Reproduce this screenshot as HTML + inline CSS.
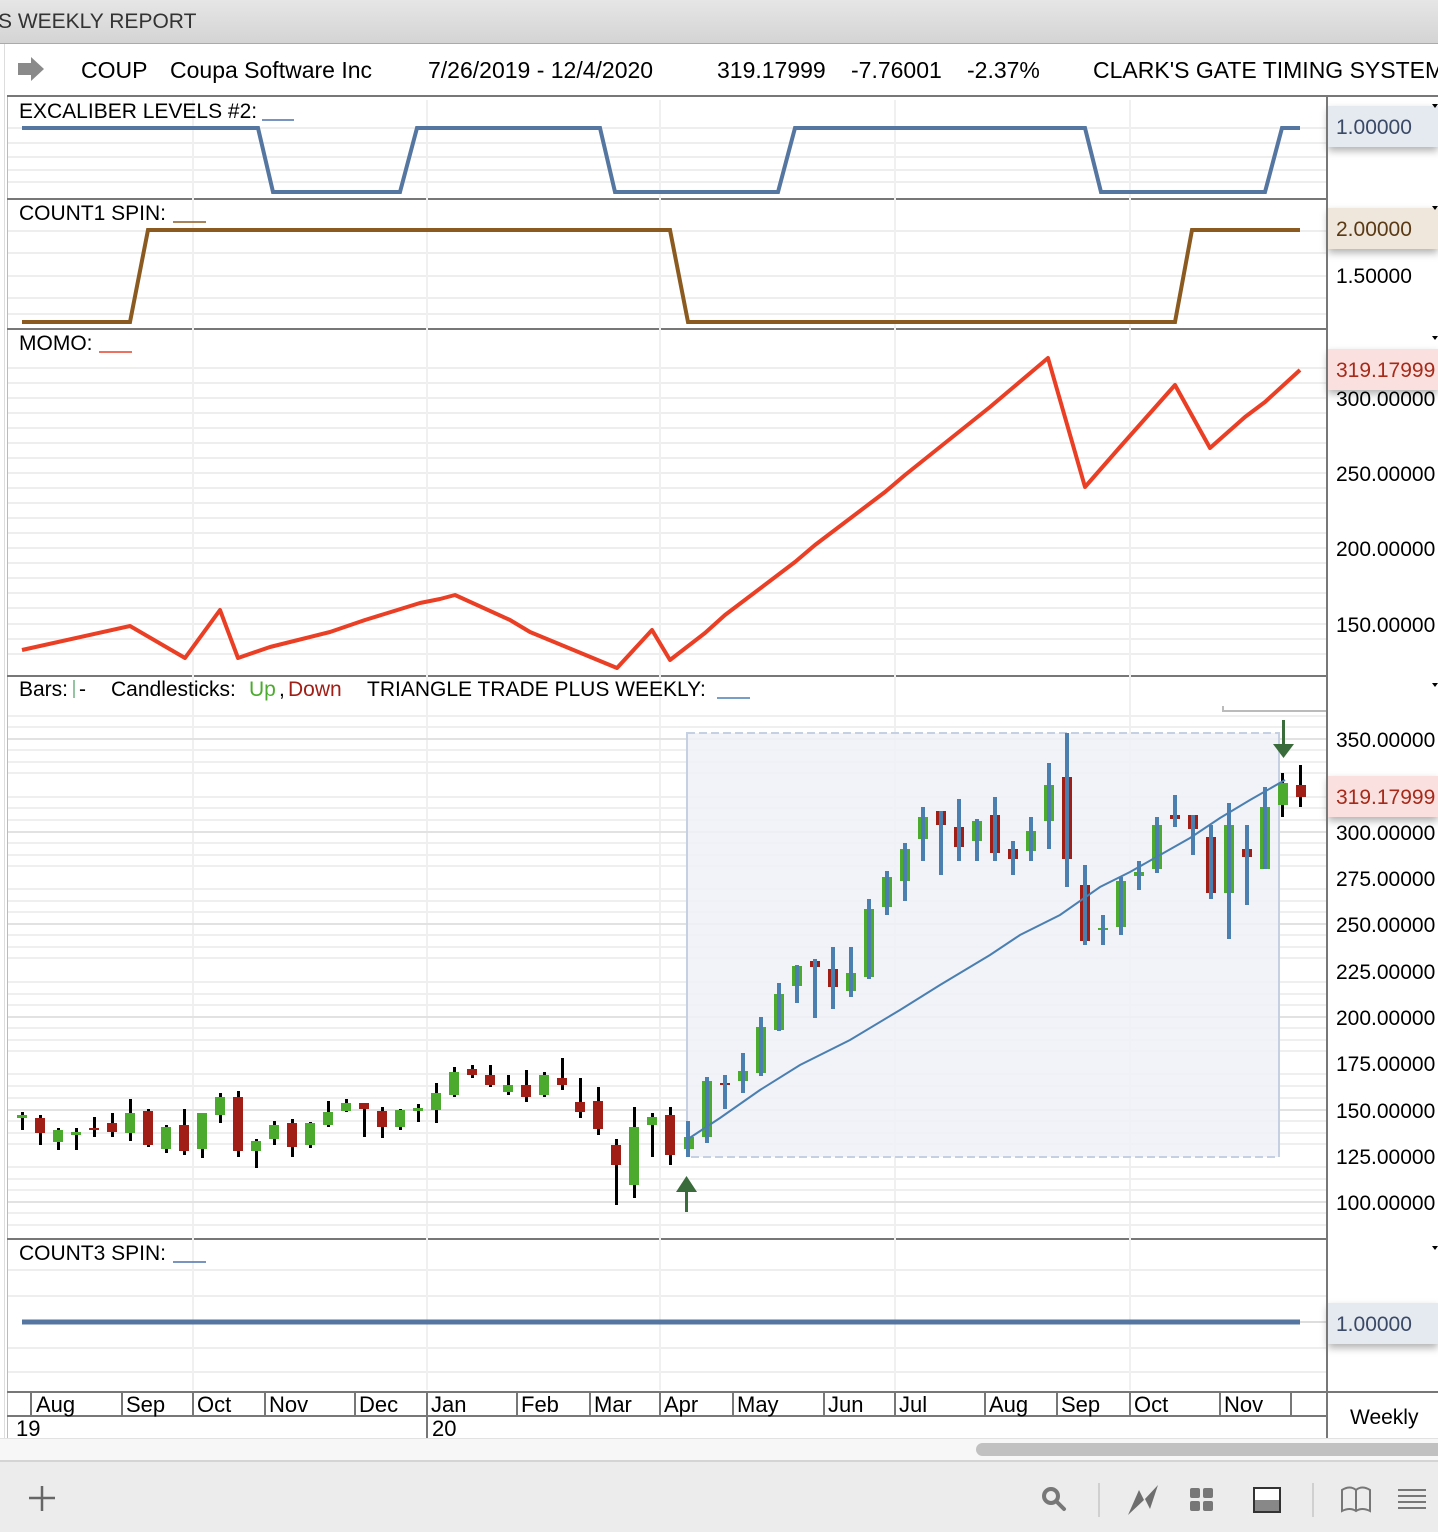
<!DOCTYPE html>
<html><head><meta charset="utf-8"><style>
html,body{margin:0;padding:0;background:#fff;}
svg{display:block;font-family:"Liberation Sans",Arial,sans-serif;}
</style></head><body>
<svg width="1438" height="1532" viewBox="0 0 1438 1532" xmlns="http://www.w3.org/2000/svg">
<defs>
<linearGradient id="tb" x1="0" y1="0" x2="0" y2="1"><stop offset="0" stop-color="#e6e6e6"/><stop offset="1" stop-color="#d4d4d4"/></linearGradient>
<filter id="sh" x="-10%" y="-40%" width="130%" height="190%"><feDropShadow dx="0" dy="4" stdDeviation="4" flood-color="#000" flood-opacity="0.3"/></filter>
</defs>
<rect x="0" y="0" width="1438" height="43" fill="url(#tb)"/>
<line x1="0" y1="43.5" x2="1438" y2="43.5" stroke="#aaa"/>
<text x="-2" y="28" font-size="21" fill="#333">S WEEKLY REPORT</text>
<rect x="0" y="44" width="1438" height="52" fill="#fff"/>
<line x1="4.5" y1="44" x2="4.5" y2="1462" stroke="#ddd"/>
<line x1="7.5" y1="96" x2="7.5" y2="1440" stroke="#bbb"/>
<path d="M18 63 h13 v-6 l13 12 -13 12 v-6 h-13z" fill="#8a8a8a"/>
<g font-size="23" fill="#000">
<text x="81" y="78">COUP</text>
<text x="170" y="78">Coupa Software Inc</text>
<text x="428" y="78">7/26/2019 - 12/4/2020</text>
<text x="717" y="78">319.17999</text>
<text x="851" y="78">-7.76001</text>
<text x="967" y="78">-2.37%</text>
<text x="1093" y="78">CLARK'S GATE TIMING SYSTEM</text>
</g>
<g stroke="#777" stroke-width="2">
<line x1="7" y1="96" x2="1438" y2="96"/>
<line x1="7" y1="199" x2="1438" y2="199"/>
<line x1="7" y1="329" x2="1438" y2="329"/>
<line x1="7" y1="676" x2="1438" y2="676"/>
<line x1="7" y1="1239" x2="1438" y2="1239"/>
<line x1="1327" y1="96" x2="1327" y2="1438"/>
</g>
<g stroke="#eeeeee" stroke-width="2">
<line x1="8" y1="128" x2="1326" y2="128"/><line x1="8" y1="143" x2="1326" y2="143"/><line x1="8" y1="157" x2="1326" y2="157"/><line x1="8" y1="170" x2="1326" y2="170"/><line x1="8" y1="182" x2="1326" y2="182"/>
<line x1="8" y1="231" x2="1326" y2="231"/><line x1="8" y1="253" x2="1326" y2="253"/><line x1="8" y1="276" x2="1326" y2="276"/><line x1="8" y1="298" x2="1326" y2="298"/><line x1="8" y1="314" x2="1326" y2="314"/>
<line x1="8" y1="368" x2="1326" y2="368"/><line x1="8" y1="383" x2="1326" y2="383"/><line x1="8" y1="398" x2="1326" y2="398"/><line x1="8" y1="413" x2="1326" y2="413"/><line x1="8" y1="428" x2="1326" y2="428"/><line x1="8" y1="443" x2="1326" y2="443"/><line x1="8" y1="458" x2="1326" y2="458"/><line x1="8" y1="473" x2="1326" y2="473"/><line x1="8" y1="488" x2="1326" y2="488"/><line x1="8" y1="503" x2="1326" y2="503"/><line x1="8" y1="518" x2="1326" y2="518"/><line x1="8" y1="533" x2="1326" y2="533"/><line x1="8" y1="548" x2="1326" y2="548"/><line x1="8" y1="563" x2="1326" y2="563"/><line x1="8" y1="578" x2="1326" y2="578"/><line x1="8" y1="593" x2="1326" y2="593"/><line x1="8" y1="608" x2="1326" y2="608"/><line x1="8" y1="624" x2="1326" y2="624"/><line x1="8" y1="639" x2="1326" y2="639"/><line x1="8" y1="654" x2="1326" y2="654"/>
<line x1="8" y1="1270" x2="1326" y2="1270"/><line x1="8" y1="1296" x2="1326" y2="1296"/><line x1="8" y1="1348" x2="1326" y2="1348"/><line x1="8" y1="1372" x2="1326" y2="1372"/>
</g>
<g stroke="#f0f0f0" stroke-width="2">
<line x1="193" y1="100" x2="193" y2="1390"/><line x1="427" y1="100" x2="427" y2="1390"/><line x1="660" y1="100" x2="660" y2="1390"/><line x1="895" y1="100" x2="895" y2="1390"/><line x1="1130" y1="100" x2="1130" y2="1390"/>
</g>
<g stroke="#efefef" stroke-width="2">
<line x1="8" y1="716" x2="1326" y2="716"/><line x1="8" y1="762" x2="1326" y2="762"/><line x1="8" y1="808" x2="1326" y2="808"/><line x1="8" y1="855" x2="1326" y2="855"/><line x1="8" y1="901" x2="1326" y2="901"/><line x1="8" y1="947" x2="1326" y2="947"/><line x1="8" y1="994" x2="1326" y2="994"/><line x1="8" y1="1040" x2="1326" y2="1040"/><line x1="8" y1="1086" x2="1326" y2="1086"/><line x1="8" y1="1133" x2="1326" y2="1133"/><line x1="8" y1="1179" x2="1326" y2="1179"/><line x1="8" y1="1225" x2="1326" y2="1225"/>
<line x1="8" y1="727" x2="1326" y2="727"/><line x1="8" y1="750" x2="1326" y2="750"/><line x1="8" y1="773" x2="1326" y2="773"/><line x1="8" y1="797" x2="1326" y2="797"/><line x1="8" y1="820" x2="1326" y2="820"/><line x1="8" y1="843" x2="1326" y2="843"/><line x1="8" y1="866" x2="1326" y2="866"/><line x1="8" y1="889" x2="1326" y2="889"/><line x1="8" y1="912" x2="1326" y2="912"/><line x1="8" y1="935" x2="1326" y2="935"/><line x1="8" y1="958" x2="1326" y2="958"/><line x1="8" y1="982" x2="1326" y2="982"/><line x1="8" y1="1005" x2="1326" y2="1005"/><line x1="8" y1="1028" x2="1326" y2="1028"/><line x1="8" y1="1051" x2="1326" y2="1051"/><line x1="8" y1="1074" x2="1326" y2="1074"/><line x1="8" y1="1098" x2="1326" y2="1098"/><line x1="8" y1="1121" x2="1326" y2="1121"/><line x1="8" y1="1144" x2="1326" y2="1144"/><line x1="8" y1="1167" x2="1326" y2="1167"/><line x1="8" y1="1190" x2="1326" y2="1190"/><line x1="8" y1="1213" x2="1326" y2="1213"/>
</g>
<g stroke="#e2e2e2" stroke-width="2">
<line x1="8" y1="739" x2="1326" y2="739"/><line x1="8" y1="832" x2="1326" y2="832"/><line x1="8" y1="924" x2="1326" y2="924"/><line x1="8" y1="1017" x2="1326" y2="1017"/><line x1="8" y1="1110" x2="1326" y2="1110"/><line x1="8" y1="1202" x2="1326" y2="1202"/>
</g>
<g font-size="21" fill="#000">
<text x="19" y="118">EXCALIBER LEVELS #2:</text><line x1="262" y1="120" x2="294" y2="120" stroke="#4a72a8" stroke-width="1.5"/>
<text x="19" y="220">COUNT1 SPIN:</text><line x1="173" y1="222" x2="206" y2="222" stroke="#8b5a20" stroke-width="1.5"/>
<text x="19" y="350">MOMO:</text><line x1="99" y1="352" x2="132" y2="352" stroke="#e8402a" stroke-width="1.5"/>
<text x="19" y="696">Bars:</text><line x1="74" y1="680" x2="74" y2="698" stroke="#2a8a40" stroke-width="1"/><text x="79" y="696">-</text>
<text x="111" y="696">Candlesticks:</text><text x="249" y="696" fill="#4cab2e">Up</text><text x="279" y="696">,</text><text x="288" y="696" fill="#a01e16">Down</text>
<text x="367" y="696">TRIANGLE TRADE PLUS WEEKLY:</text><line x1="717" y1="698" x2="750" y2="698" stroke="#4a7fb0" stroke-width="1.5"/>
<text x="19" y="1260">COUNT3 SPIN:</text><line x1="173" y1="1262" x2="206" y2="1262" stroke="#4a72a8" stroke-width="1.5"/>
</g>
<polyline fill="none" stroke="#5576a0" stroke-width="4" points="22,128 258,128 273,192 400,192 417,128 600,128 615,192 778,192 795,128 1085,128 1101,192 1265,192 1282,128 1300,128"/>
<polyline fill="none" stroke="#8b5a20" stroke-width="4" points="22,322 130,322 148,230 670,230 688,322 1175,322 1192,230 1300,230"/>
<polyline fill="none" stroke="#ea3f24" stroke-width="4" stroke-linejoin="round" points="22,650 130,626 185,658 220,610 238,658 270,647 290,642 330,632 365,620 420,603 440,599 455,595 510,620 530,632 617,668 652,630 670,660 705,633 725,615 795,562 815,545 885,492 905,475 990,407 1048,358 1085,487 1120,447 1175,385 1210,448 1245,417 1265,402 1300,370"/>
<line x1="22" y1="1322" x2="1300" y2="1322" stroke="#5576a0" stroke-width="5"/>
<line x1="1300" y1="1322" x2="1326" y2="1322" stroke="#ddd" stroke-width="2"/>
<rect x="687" y="733" width="592" height="424" fill="#eef1f8" fill-opacity="0.85" stroke="#c5d0e3" stroke-width="2" stroke-dasharray="8,4"/>
<line x1="687" y1="733" x2="687" y2="1157" stroke="#c5d0e3" stroke-width="2"/>
<line x1="1279" y1="733" x2="1279" y2="1157" stroke="#c5d0e3" stroke-width="2"/>
<path d="M1223 706 v5 h104" fill="none" stroke="#bbb" stroke-width="2"/>
<g>
<rect x="21" y="1112" width="3" height="18"/><rect x="17" y="1115" width="10" height="3" fill="#4cab2e"/>
<rect x="39" y="1115" width="3" height="30"/><rect x="35" y="1118" width="10" height="15" fill="#a01e16"/>
<rect x="57" y="1128" width="3" height="22"/><rect x="53" y="1130" width="10" height="12" fill="#4cab2e"/>
<rect x="75" y="1128" width="3" height="22"/><rect x="71" y="1132" width="10" height="3" fill="#4cab2e"/>
<rect x="93" y="1117" width="3" height="20"/><rect x="89" y="1128" width="10" height="2" fill="#a01e16"/>
<rect x="111" y="1113" width="3" height="24"/><rect x="107" y="1123" width="10" height="9" fill="#a01e16"/>
<rect x="129" y="1099" width="3" height="42"/><rect x="125" y="1113" width="10" height="20" fill="#4cab2e"/>
<rect x="147" y="1109" width="3" height="38"/><rect x="143" y="1111" width="10" height="34" fill="#a01e16"/>
<rect x="165" y="1125" width="3" height="28"/><rect x="161" y="1127" width="10" height="22" fill="#4cab2e"/>
<rect x="183" y="1109" width="3" height="46"/><rect x="179" y="1125" width="10" height="26" fill="#a01e16"/>
<rect x="201" y="1113" width="3" height="45"/><rect x="197" y="1113" width="10" height="36" fill="#4cab2e"/>
<rect x="219" y="1093" width="3" height="30"/><rect x="215" y="1097" width="10" height="18" fill="#4cab2e"/>
<rect x="237" y="1091" width="3" height="66"/><rect x="233" y="1097" width="10" height="54" fill="#a01e16"/>
<rect x="255" y="1139" width="3" height="29"/><rect x="251" y="1141" width="10" height="10" fill="#4cab2e"/>
<rect x="273" y="1121" width="3" height="24"/><rect x="269" y="1125" width="10" height="14" fill="#4cab2e"/>
<rect x="291" y="1119" width="3" height="38"/><rect x="287" y="1123" width="10" height="24" fill="#a01e16"/>
<rect x="309" y="1122" width="3" height="26"/><rect x="305" y="1123" width="10" height="22" fill="#4cab2e"/>
<rect x="327" y="1101" width="3" height="26"/><rect x="323" y="1112" width="10" height="13" fill="#4cab2e"/>
<rect x="345" y="1099" width="3" height="13"/><rect x="341" y="1103" width="10" height="8" fill="#4cab2e"/>
<rect x="363" y="1103" width="3" height="34"/><rect x="359" y="1103" width="10" height="6" fill="#a01e16"/>
<rect x="381" y="1107" width="3" height="31"/><rect x="377" y="1111" width="10" height="16" fill="#a01e16"/>
<rect x="399" y="1109" width="3" height="21"/><rect x="395" y="1110" width="10" height="17" fill="#4cab2e"/>
<rect x="417" y="1104" width="3" height="18"/><rect x="413" y="1108" width="10" height="3" fill="#4cab2e"/>
<rect x="435" y="1083" width="3" height="40"/><rect x="431" y="1093" width="10" height="17" fill="#4cab2e"/>
<rect x="453" y="1067" width="3" height="30"/><rect x="449" y="1072" width="10" height="23" fill="#4cab2e"/>
<rect x="471" y="1065" width="3" height="13"/><rect x="467" y="1069" width="10" height="6" fill="#a01e16"/>
<rect x="489" y="1065" width="3" height="22"/><rect x="485" y="1075" width="10" height="10" fill="#a01e16"/>
<rect x="507" y="1075" width="3" height="20"/><rect x="503" y="1085" width="10" height="7" fill="#4cab2e"/>
<rect x="525" y="1070" width="3" height="32"/><rect x="521" y="1085" width="10" height="12" fill="#a01e16"/>
<rect x="543" y="1072" width="3" height="25"/><rect x="539" y="1075" width="10" height="20" fill="#4cab2e"/>
<rect x="561" y="1058" width="3" height="32"/><rect x="557" y="1078" width="10" height="7" fill="#a01e16"/>
<rect x="579" y="1078" width="3" height="40"/><rect x="575" y="1102" width="10" height="10" fill="#a01e16"/>
<rect x="597" y="1087" width="3" height="48"/><rect x="593" y="1101" width="10" height="28" fill="#a01e16"/>
<rect x="615" y="1139" width="3" height="66"/><rect x="611" y="1145" width="10" height="20" fill="#a01e16"/>
<rect x="633" y="1107" width="3" height="91"/><rect x="629" y="1127" width="10" height="58" fill="#4cab2e"/>
<rect x="651" y="1113" width="3" height="44"/><rect x="647" y="1117" width="10" height="8" fill="#4cab2e"/>
<rect x="669" y="1107" width="3" height="58"/><rect x="665" y="1115" width="10" height="40" fill="#a01e16"/>
</g>
<g>
<rect x="684" y="1137" width="10" height="12" fill="#4cab2e"/><rect x="686" y="1121" width="4" height="36" fill="#4a7fb0"/>
<rect x="702" y="1081" width="10" height="56" fill="#4cab2e"/><rect x="705" y="1077" width="4" height="66" fill="#4a7fb0"/>
<rect x="720" y="1083" width="10" height="2" fill="#a01e16"/><rect x="723" y="1075" width="4" height="34" fill="#4a7fb0"/>
<rect x="738" y="1071" width="10" height="10" fill="#4cab2e"/><rect x="741" y="1053" width="4" height="40" fill="#4a7fb0"/>
<rect x="756" y="1027" width="10" height="46" fill="#4cab2e"/><rect x="759" y="1017" width="4" height="59" fill="#4a7fb0"/>
<rect x="774" y="994" width="10" height="36" fill="#4cab2e"/><rect x="777" y="983" width="4" height="48" fill="#4a7fb0"/>
<rect x="792" y="966" width="10" height="20" fill="#4cab2e"/><rect x="795" y="965" width="4" height="38" fill="#4a7fb0"/>
<rect x="810" y="961" width="10" height="6" fill="#a01e16"/><rect x="813" y="959" width="4" height="59" fill="#4a7fb0"/>
<rect x="828" y="969" width="10" height="18" fill="#a01e16"/><rect x="831" y="947" width="4" height="62" fill="#4a7fb0"/>
<rect x="846" y="973" width="10" height="18" fill="#4cab2e"/><rect x="849" y="947" width="4" height="50" fill="#4a7fb0"/>
<rect x="864" y="909" width="10" height="68" fill="#4cab2e"/><rect x="867" y="899" width="4" height="80" fill="#4a7fb0"/>
<rect x="882" y="877" width="10" height="30" fill="#4cab2e"/><rect x="885" y="871" width="4" height="44" fill="#4a7fb0"/>
<rect x="900" y="849" width="10" height="32" fill="#4cab2e"/><rect x="903" y="843" width="4" height="58" fill="#4a7fb0"/>
<rect x="918" y="817" width="10" height="22" fill="#4cab2e"/><rect x="921" y="807" width="4" height="54" fill="#4a7fb0"/>
<rect x="936" y="811" width="10" height="14" fill="#a01e16"/><rect x="939" y="811" width="4" height="64" fill="#4a7fb0"/>
<rect x="954" y="827" width="10" height="20" fill="#a01e16"/><rect x="957" y="799" width="4" height="62" fill="#4a7fb0"/>
<rect x="972" y="821" width="10" height="20" fill="#4cab2e"/><rect x="975" y="819" width="4" height="42" fill="#4a7fb0"/>
<rect x="990" y="815" width="10" height="38" fill="#a01e16"/><rect x="993" y="797" width="4" height="64" fill="#4a7fb0"/>
<rect x="1008" y="849" width="10" height="10" fill="#a01e16"/><rect x="1011" y="841" width="4" height="34" fill="#4a7fb0"/>
<rect x="1026" y="831" width="10" height="20" fill="#4cab2e"/><rect x="1029" y="817" width="4" height="44" fill="#4a7fb0"/>
<rect x="1044" y="785" width="10" height="36" fill="#4cab2e"/><rect x="1047" y="763" width="4" height="86" fill="#4a7fb0"/>
<rect x="1062" y="777" width="10" height="82" fill="#a01e16"/><rect x="1065" y="733" width="4" height="154" fill="#4a7fb0"/>
<rect x="1080" y="885" width="10" height="56" fill="#a01e16"/><rect x="1083" y="865" width="4" height="80" fill="#4a7fb0"/>
<rect x="1098" y="928" width="10" height="2" fill="#4cab2e"/><rect x="1101" y="915" width="4" height="30" fill="#4a7fb0"/>
<rect x="1116" y="881" width="10" height="46" fill="#4cab2e"/><rect x="1119" y="877" width="4" height="58" fill="#4a7fb0"/>
<rect x="1134" y="872" width="10" height="4" fill="#4cab2e"/><rect x="1137" y="861" width="4" height="29" fill="#4a7fb0"/>
<rect x="1152" y="825" width="10" height="44" fill="#4cab2e"/><rect x="1155" y="817" width="4" height="56" fill="#4a7fb0"/>
<rect x="1170" y="815" width="10" height="4" fill="#a01e16"/><rect x="1173" y="795" width="4" height="32" fill="#4a7fb0"/>
<rect x="1188" y="815" width="10" height="14" fill="#a01e16"/><rect x="1191" y="815" width="4" height="40" fill="#4a7fb0"/>
<rect x="1206" y="837" width="10" height="56" fill="#a01e16"/><rect x="1209" y="825" width="4" height="74" fill="#4a7fb0"/>
<rect x="1224" y="825" width="10" height="68" fill="#4cab2e"/><rect x="1227" y="803" width="4" height="136" fill="#4a7fb0"/>
<rect x="1242" y="849" width="10" height="8" fill="#a01e16"/><rect x="1245" y="825" width="4" height="80" fill="#4a7fb0"/>
<rect x="1260" y="807" width="10" height="62" fill="#4cab2e"/><rect x="1263" y="787" width="4" height="82" fill="#4a7fb0"/>
<rect x="1281" y="773" width="3" height="44"/><rect x="1278" y="783" width="10" height="22" fill="#4cab2e"/>
<rect x="1299" y="765" width="3" height="42"/><rect x="1296" y="785" width="10" height="12" fill="#a01e16"/>
</g>
<polyline fill="none" stroke="#4a7fb0" stroke-width="2" points="688,1139 720,1118 760,1090 800,1065 850,1040 900,1010 940,985 990,955 1020,935 1060,915 1100,887 1130,872 1160,855 1190,838 1220,818 1250,800 1285,780"/>
<g fill="#3a6b3a"><rect x="685" y="1190" width="3" height="22"/><path d="M676 1192 L686.5 1176 L697 1192Z"/>
<rect x="1282" y="720" width="3" height="26"/><path d="M1273 744 L1283.5 758 L1294 744Z"/></g>
<rect x="1328" y="97" width="110" height="1340" fill="#fff"/>
<rect x="1328" y="106" width="110" height="41" fill="#e5e9f0" filter="url(#sh)"/>
<rect x="1328" y="208" width="110" height="41" fill="#efe6dc" filter="url(#sh)"/>
<rect x="1328" y="349" width="110" height="41" fill="#fae1df" filter="url(#sh)"/>
<rect x="1328" y="776" width="110" height="41" fill="#fae1df" filter="url(#sh)"/>
<rect x="1328" y="1303" width="110" height="41" fill="#e5e9f0" filter="url(#sh)"/>
<g font-size="21" fill="#000">
<text x="1336" y="134" fill="#3a4a66">1.00000</text>
<text x="1336" y="236" fill="#5a3a14">2.00000</text>
<text x="1336" y="283">1.50000</text>
<text x="1336" y="406">300.00000</text>
<text x="1336" y="377" fill="#a52a1a">319.17999</text>
<text x="1336" y="481">250.00000</text>
<text x="1336" y="556">200.00000</text>
<text x="1336" y="632">150.00000</text>
<text x="1336" y="747">350.00000</text>
<text x="1336" y="804" fill="#a52a1a">319.17999</text>
<text x="1336" y="840">300.00000</text>
<text x="1336" y="886">275.00000</text>
<text x="1336" y="932">250.00000</text>
<text x="1336" y="979">225.00000</text>
<text x="1336" y="1025">200.00000</text>
<text x="1336" y="1071">175.00000</text>
<text x="1336" y="1118">150.00000</text>
<text x="1336" y="1164">125.00000</text>
<text x="1336" y="1210">100.00000</text>
<text x="1336" y="1331" fill="#3a4a66">1.00000</text>
<text x="1350" y="1424">Weekly</text>
</g>
<g fill="#000"><path d="M1432 104h6l-3 4z"/><path d="M1432 206h6l-3 4z"/><path d="M1432 336h6l-3 4z"/><path d="M1432 683h6l-3 4z"/><path d="M1432 1246h6l-3 4z"/></g>
<line x1="1327" y1="96" x2="1327" y2="1438" stroke="#777" stroke-width="2"/>
<line x1="7" y1="1392" x2="1327" y2="1392" stroke="#777" stroke-width="2"/>
<line x1="7" y1="1416" x2="1327" y2="1416" stroke="#777" stroke-width="2"/>
<line x1="1327" y1="1392" x2="1438" y2="1392" stroke="#777" stroke-width="2"/>
<g stroke="#777" stroke-width="2">
<line x1="31" y1="1392" x2="31" y2="1416"/><line x1="122" y1="1392" x2="122" y2="1416"/><line x1="193" y1="1392" x2="193" y2="1416"/><line x1="265" y1="1392" x2="265" y2="1416"/><line x1="355" y1="1392" x2="355" y2="1416"/><line x1="427" y1="1392" x2="427" y2="1438"/><line x1="517" y1="1392" x2="517" y2="1416"/><line x1="590" y1="1392" x2="590" y2="1416"/><line x1="660" y1="1392" x2="660" y2="1416"/><line x1="733" y1="1392" x2="733" y2="1416"/><line x1="824" y1="1392" x2="824" y2="1416"/><line x1="895" y1="1392" x2="895" y2="1416"/><line x1="985" y1="1392" x2="985" y2="1416"/><line x1="1057" y1="1392" x2="1057" y2="1416"/><line x1="1130" y1="1392" x2="1130" y2="1416"/><line x1="1220" y1="1392" x2="1220" y2="1416"/><line x1="1291" y1="1392" x2="1291" y2="1416"/>
</g>
<g font-size="22" fill="#000">
<text x="36" y="1412">Aug</text><text x="126" y="1412">Sep</text><text x="197" y="1412">Oct</text><text x="269" y="1412">Nov</text><text x="359" y="1412">Dec</text><text x="431" y="1412">Jan</text><text x="521" y="1412">Feb</text><text x="594" y="1412">Mar</text><text x="664" y="1412">Apr</text><text x="737" y="1412">May</text><text x="828" y="1412">Jun</text><text x="899" y="1412">Jul</text><text x="989" y="1412">Aug</text><text x="1061" y="1412">Sep</text><text x="1134" y="1412">Oct</text><text x="1224" y="1412">Nov</text>
<text x="16" y="1436">19</text><text x="432" y="1436">20</text>
</g>
<rect x="0" y="1438" width="1438" height="24" fill="#f7f7f7"/>
<line x1="0" y1="1438.5" x2="1438" y2="1438.5" stroke="#e2e2e2"/>
<rect x="976" y="1443" width="470" height="13" rx="6.5" fill="#c1c1c1"/>
<rect x="0" y="1461" width="1438" height="71" fill="#ececec"/>
<line x1="0" y1="1461" x2="1438" y2="1461" stroke="#d4d4d4" stroke-width="2"/>
<g stroke="#666" stroke-width="2.5"><line x1="42" y1="1486" x2="42" y2="1511"/><line x1="29" y1="1498" x2="55" y2="1498"/></g>
<g fill="none" stroke="#777" stroke-width="4"><circle cx="1051" cy="1496" r="7"/><line x1="1056" y1="1501" x2="1064" y2="1509" stroke-linecap="round"/></g>
<line x1="1099" y1="1483" x2="1099" y2="1517" stroke="#d0d0d0" stroke-width="2"/>
<path d="M1128 1515 L1139 1490 L1144 1500 L1158 1485 L1150 1509 L1145 1499Z" fill="#6e6e6e"/>
<g fill="#777"><rect x="1190" y="1488" width="10" height="10" rx="2"/><rect x="1203" y="1488" width="10" height="10" rx="2"/><rect x="1190" y="1501" width="10" height="10" rx="2"/><rect x="1203" y="1501" width="10" height="10" rx="2"/></g>
<rect x="1254" y="1488" width="26" height="24" fill="#fff" stroke="#333" stroke-width="2"/><rect x="1255" y="1500" width="24" height="11" fill="#888"/>
<line x1="1313" y1="1483" x2="1313" y2="1517" stroke="#d0d0d0" stroke-width="2"/>
<path d="M1342 1511 V1490 Q1350 1485 1356 1490 Q1362 1485 1370 1490 V1511 Q1362 1507 1356 1511 Q1350 1507 1342 1511Z M1356 1490 V1511" fill="none" stroke="#777" stroke-width="2"/>
<g stroke="#777" stroke-width="2"><line x1="1398" y1="1490" x2="1426" y2="1490"/><line x1="1398" y1="1496" x2="1426" y2="1496"/><line x1="1398" y1="1502" x2="1426" y2="1502"/><line x1="1398" y1="1508" x2="1426" y2="1508"/></g>
</svg>
</body></html>
